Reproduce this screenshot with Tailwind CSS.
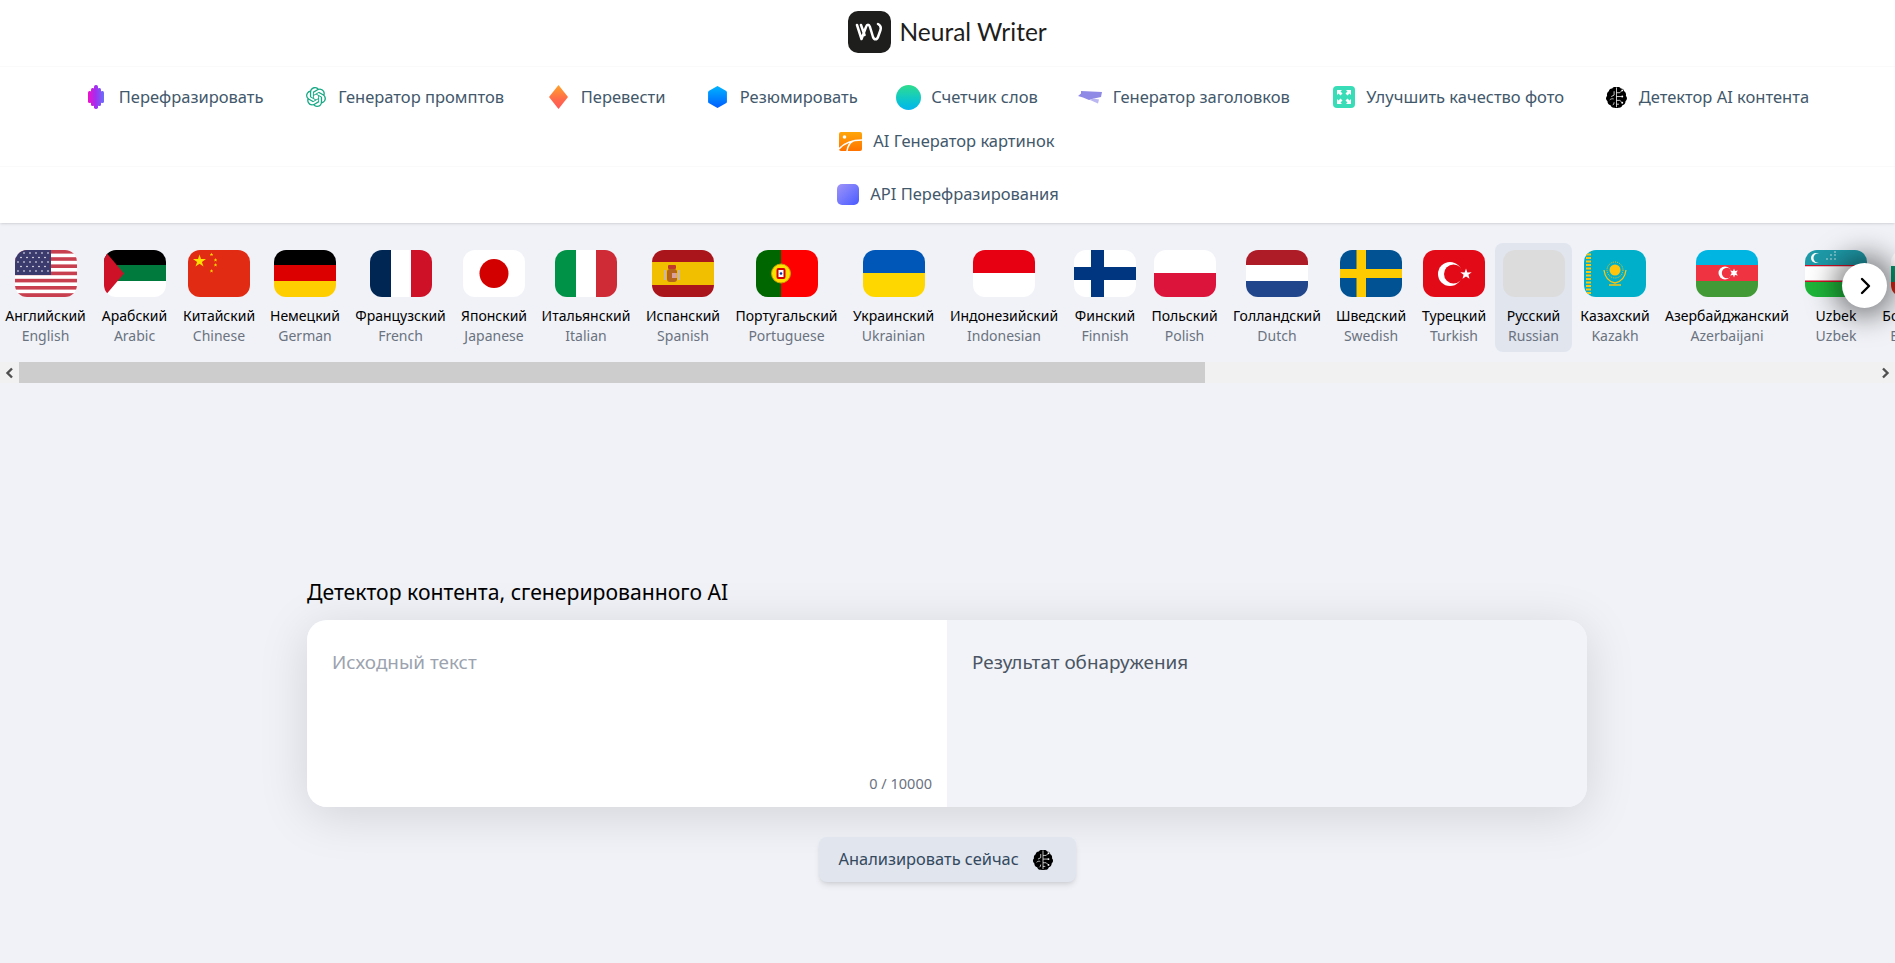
<!DOCTYPE html>
<html lang="ru">
<head>
  <meta charset="UTF-8">
  <title>Neural Writer</title>
  <script src="https://cdn.jsdelivr.net/npm/@tailwindcss/browser@4"></script>
</head>
<body class="bg-[#f0f2f7] font-['Noto_Sans',sans-serif] overflow-hidden h-[963px]">
  <svg class="hidden">
    <defs>
      <symbol id="brain" viewBox="0 0 24 24">
        <path fill="#000" d="M12 1.500C10.500 .7 8.500 1.200 7.500 2.600 5.600 2.500 4.200 3.800 4 5.600 2.400 6.500 1.600 8.500 2.200 10.200 .5 12 .7 14.400 2.600 15.800 2.400 17.800 3.800 19.500 5.600 19.800 6.200 21.700 8 23 10 22.600 10.700 23 11.400 23.100 12 22.800 12.600 23.100 13.300 23 14 22.600 16 23 17.800 21.700 18.400 19.800 20.200 19.500 21.600 17.800 21.400 15.800 23.300 14.400 23.500 12 21.800 10.200 22.400 8.500 21.600 6.500 20 5.600 19.800 3.800 18.400 2.500 16.500 2.600 15.500 1.200 13.500 .7 12 1.500Z"/>
        <path fill="none" stroke="#fff" stroke-width=".8" d="M12 2v20M12 7h3.500l2-2M12 11h5.500M12 15h3.500l2 2M12 19h2.500M9.500 5.500v4l-3 1.500M9 13.500c-1.500-.5-3 0-4 1M9.500 17c0 1.500-.5 2.500-1.500 3"/>
        <g fill="#fff"><circle cx="18" cy="11" r="1"/><circle cx="18" cy="4.600" r="1"/><circle cx="18" cy="17.400" r="1"/></g>
      </symbol>
      <symbol id="ministar" viewBox="-2 -2 4 4">
        <path fill="#ffde00" d="M0-2l.5 1.400h1.400l-1.100.8.4 1.400L0 .8l-1.200.8.4-1.400-1.100-.8h1.400Z"/>
      </symbol>
    </defs>
  </svg>

  <header class="bg-white shadow-sm">
    <div class="h-[67px] flex items-center justify-center gap-[9px] pb-[2px] border-b border-[#fafafa]">
      <div class="w-[43px] h-[42px] rounded-[10px] bg-[#1e1e1c] flex items-center justify-center">
        <svg width="28" height="20" viewBox="0 0 28 20" fill="none" stroke="#fff" stroke-width="2.500" stroke-linecap="round" stroke-linejoin="round"><path d="M2 3l4.500 14L11 5c1-3 3-3 4 0l3 10c1 3 4 3 5 0l2.500-7c.8-3-.5-5-2.500-6M6 3l3.500 10"/></svg>
      </div>
      <span class="w-[148px] whitespace-nowrap font-['Lato',sans-serif] text-[24.500px] leading-none text-[#1e1e1c]">Neural Writer</span>
    </div>

    <nav class="h-[100px] pt-[8px] flex flex-wrap justify-center content-start text-[16.500px] text-[#42586b] border-b border-[#fafafa]">
      <a class="h-[44px] flex items-center gap-[10.500px] px-[20px]">
        <span class="w-[24px] flex justify-center">
          <svg class="w-[16px] h-[24px]" viewBox="0 0 16 24"><defs><linearGradient id="g1" gradientUnits="userSpaceOnUse" x1="0" x2="16" y1="0" y2="0"><stop offset="0" stop-color="#f010c8"/><stop offset=".5" stop-color="#a030f0"/><stop offset="1" stop-color="#6a70f8"/></linearGradient></defs><g fill="url(#g1)"><rect x="0" y="6" width="3.500" height="12" rx="1.500"/><rect x="3" y="3" width="3.500" height="18" rx="1.500"/><rect x="6" y="0" width="4" height="24" rx="1.800"/><rect x="9.500" y="3" width="3.500" height="18" rx="1.500"/><rect x="12.500" y="6" width="3.500" height="12" rx="1.500"/></g></svg>
        </span>
        <span class="w-[145px] whitespace-nowrap">Перефразировать</span>
      </a>
      <a class="h-[44px] flex items-center gap-[10.500px] px-[20px]">
        <span class="w-[24px] flex justify-center">
          <svg class="w-[20px] h-[20px]" viewBox="0 0 24 24"><path fill="#17a884" d="M22.2819 9.8211a5.9847 5.9847 0 0 0-.5157-4.9108 6.0462 6.0462 0 0 0-6.5098-2.9A6.0651 6.0651 0 0 0 4.9807 4.1818a5.9847 5.9847 0 0 0-3.9977 2.9 6.0462 6.0462 0 0 0 .7427 7.0966 5.98 5.98 0 0 0 .511 4.9107 6.051 6.051 0 0 0 6.5146 2.9001A5.9847 5.9847 0 0 0 13.2599 24a6.0557 6.0557 0 0 0 5.7718-4.2058 5.9894 5.9894 0 0 0 3.9977-2.9001 6.0557 6.0557 0 0 0-.7475-7.0729zm-9.022 12.6081a4.4755 4.4755 0 0 1-2.8764-1.0408l.1419-.0804 4.7783-2.7582a.7948.7948 0 0 0 .3927-.6813v-6.7369l2.02 1.1686a.071.071 0 0 1 .038.052v5.5826a4.504 4.504 0 0 1-4.4945 4.4944zm-9.6607-4.1254a4.4708 4.4708 0 0 1-.5346-3.0137l.142.0852 4.783 2.7582a.7712.7712 0 0 0 .7806 0l5.8428-3.3685v2.3324a.0804.0804 0 0 1-.0332.0615L9.74 19.9502a4.4992 4.4992 0 0 1-6.1408-1.6464zM2.3408 7.8956a4.485 4.485 0 0 1 2.3655-1.9728V11.6a.7664.7664 0 0 0 .3879.6765l5.8144 3.3543-2.0201 1.1685a.0757.0757 0 0 1-.071 0l-4.8303-2.7865A4.504 4.504 0 0 1 2.3408 7.872zm16.5963 3.8558L13.1038 8.364 15.1192 7.2a.0757.0757 0 0 1 .071 0l4.8303 2.7913a4.4944 4.4944 0 0 1-.6765 8.1042v-5.6772a.79.79 0 0 0-.407-.667zm2.0107-3.0231l-.142-.0852-4.7735-2.7818a.7759.7759 0 0 0-.7854 0L9.409 9.2297V6.8974a.0662.0662 0 0 1 .0284-.0615l4.8303-2.7866a4.4992 4.4992 0 0 1 6.6802 4.66zM8.3065 12.863l-2.02-1.1638a.0804.0804 0 0 1-.038-.0567V6.0742a4.4992 4.4992 0 0 1 7.3757-3.4537l-.142.0805L8.704 5.459a.7948.7948 0 0 0-.3927.6813zm1.0976-2.3654l2.602-1.4998 2.6069 1.4998v2.9994l-2.5974 1.4997-2.6067-1.4997Z"/></svg>
        </span>
        <span class="w-[168px] whitespace-nowrap">Генератор промптов</span>
      </a>
      <a class="h-[44px] flex items-center gap-[10.500px] px-[20px]">
        <span class="w-[24px] flex justify-center">
          <svg class="w-[19px] h-[24px]" viewBox="0 0 19 24"><defs><linearGradient id="g3" x1="0" x2="0" y1="0" y2="1"><stop offset="0" stop-color="#ffa32b"/><stop offset=".6" stop-color="#ff6a4a"/><stop offset="1" stop-color="#ff5757"/></linearGradient></defs><path fill="url(#g3)" d="M9.500 0L19 12 9.500 24 0 12Z"/></svg>
        </span>
        <span class="w-[84.500px] whitespace-nowrap">Перевести</span>
      </a>
      <a class="h-[44px] flex items-center gap-[10.500px] px-[20px]">
        <span class="w-[24px] flex justify-center">
          <svg class="w-[19px] h-[22px]" viewBox="0 0 18 21"><defs><linearGradient id="g4" x1="0" x2="0" y1="0" y2="1"><stop offset="0" stop-color="#00b4ff"/><stop offset="1" stop-color="#005cff"/></linearGradient></defs><path fill="url(#g4)" d="M9 0l8 4.500q1 .5 1 1.500v9q0 1-1 1.500L9 21 1 16.500Q0 16 0 15V6q0-1 1-1.500Z"/></svg>
        </span>
        <span class="w-[117px] whitespace-nowrap">Резюмировать</span>
      </a>
      <a class="h-[44px] flex items-center gap-[10.500px] px-[20px]">
        <span class="w-[24px] flex justify-center">
          <span class="w-[25px] h-[25px] shrink-0 rounded-full bg-linear-to-b from-[#2fdc8c] to-[#08b5ee]"></span>
        </span>
        <span class="w-[107px] whitespace-nowrap">Счетчик слов</span>
      </a>
      <a class="h-[44px] flex items-center gap-[10.500px] px-[20px]">
        <span class="w-[24px] flex justify-center">
          <svg class="w-[24px] h-[13px]" viewBox="0 0 24 13"><path fill="#8f8ae6" d="M3 0l21 1-1 5-7 1.500-5 1.500-6-2.500L0 5l3-2.500Z"/><path fill="#b9b6f2" d="M15 7.500l6 1-1 4-8-3.500Z"/></svg>
        </span>
        <span class="w-[179px] whitespace-nowrap">Генератор заголовков</span>
      </a>
      <a class="h-[44px] flex items-center gap-[10.500px] px-[20px]">
        <span class="w-[24px] flex justify-center">
          <svg class="w-[22px] h-[22px]" viewBox="0 0 22 22"><rect width="22" height="22" rx="4" fill="#38dcb6"/><g fill="#fff"><path d="M4 4h5L7.500 5.500l2 2-2 2-2-2L4 9Z"/><path d="M18 4h-5l1.500 1.500-2 2 2 2 2-2L18 9Z"/><path d="M4 18h5l-1.500-1.500 2-2-2-2-2 2L4 13Z"/><path d="M18 18h-5l1.500-1.500-2-2 2-2 2 2L18 13Z"/></g></svg>
        </span>
        <span class="w-[198px] whitespace-nowrap">Улучшить качество фото</span>
      </a>
      <a class="h-[44px] flex items-center gap-[10.500px] px-[20px]">
        <span class="w-[24px] flex justify-center">
          <svg class="w-[23px] h-[23px]"><use href="#brain"/></svg>
        </span>
        <span class="w-[172px] whitespace-nowrap">Детектор AI контента</span>
      </a>
      <a class="h-[44px] flex items-center gap-[10.500px] px-[20px]">
        <span class="w-[24px] flex justify-center">
          <svg class="w-[23px] h-[19px]" viewBox="0 0 23 19"><defs><linearGradient id="g9" x1="0" x2="0" y1="0" y2="1"><stop offset="0" stop-color="#ffa60a"/><stop offset="1" stop-color="#ff7300"/></linearGradient></defs><rect width="23" height="19" rx="2" fill="url(#g9)"/><path fill="none" stroke="#fff" stroke-width="1.500" d="M0 17c6-7 15-9 23-9M8 19c.5-4 2.500-8 6-10"/><circle cx="5.500" cy="5" r="1.800" fill="#fff"/></svg>
        </span>
        <span class="w-[183px] whitespace-nowrap">AI Генератор картинок</span>
      </a>
    </nav>

    <div class="h-[56px] flex items-center justify-center gap-[10.500px] pb-[1px] text-[16.500px] text-[#42586b]">
      <span class="w-[24px] flex justify-center">
        <span class="w-[22px] h-[21px] rounded-[5px] bg-linear-to-br from-[#a093f8] to-[#4a58ff]"></span>
      </span>
      <span class="w-[189px] whitespace-nowrap">API Перефразирования</span>
    </div>
  </header>

  <section class="relative pt-[20px]">
    <div class="flex overflow-hidden -ml-[3px] w-[1898px] text-center text-[14px] leading-[20px] text-black">
      <div class="w-[97px] shrink-0 pt-[7px] pb-[6px] flex flex-col items-center rounded-lg">
        <div class="w-[62px] h-[47px] rounded-[12px] overflow-hidden mb-[9px]">
          <svg width="62" height="47" viewBox="0 0 62 47"><rect width="62" height="47" fill="#fff"/><g fill="#c8404f"><rect width="62" height="3.600"/><rect y="7.200" width="62" height="3.600"/><rect y="14.400" width="62" height="3.600"/><rect y="21.600" width="62" height="3.600"/><rect y="28.800" width="62" height="3.600"/><rect y="36" width="62" height="3.600"/><rect y="43.200" width="62" height="3.800"/></g><rect width="36" height="25" fill="#3c3b6e"/><g fill="#fff"><circle cx="3" cy="3" r=".8"/><circle cx="9" cy="3" r=".8"/><circle cx="15" cy="3" r=".8"/><circle cx="21" cy="3" r=".8"/><circle cx="27" cy="3" r=".8"/><circle cx="33" cy="3" r=".8"/><circle cx="6" cy="7.500" r=".8"/><circle cx="12" cy="7.500" r=".8"/><circle cx="18" cy="7.500" r=".8"/><circle cx="24" cy="7.500" r=".8"/><circle cx="30" cy="7.500" r=".8"/><circle cx="3" cy="12" r=".8"/><circle cx="9" cy="12" r=".8"/><circle cx="15" cy="12" r=".8"/><circle cx="21" cy="12" r=".8"/><circle cx="27" cy="12" r=".8"/><circle cx="33" cy="12" r=".8"/><circle cx="6" cy="16.500" r=".8"/><circle cx="12" cy="16.500" r=".8"/><circle cx="18" cy="16.500" r=".8"/><circle cx="24" cy="16.500" r=".8"/><circle cx="30" cy="16.500" r=".8"/><circle cx="3" cy="21" r=".8"/><circle cx="9" cy="21" r=".8"/><circle cx="15" cy="21" r=".8"/><circle cx="21" cy="21" r=".8"/><circle cx="27" cy="21" r=".8"/><circle cx="33" cy="21" r=".8"/></g></svg>
        </div>
        <span class="whitespace-nowrap">Английский</span><span class="text-[#6b7280] whitespace-nowrap">English</span>
      </div>
      <div class="w-[81px] shrink-0 pt-[7px] pb-[6px] flex flex-col items-center rounded-lg">
        <div class="w-[62px] h-[47px] rounded-[12px] overflow-hidden mb-[9px]">
          <svg width="62" height="47" viewBox="0 0 62 47"><rect width="62" height="15" fill="#000"/><rect y="15" width="62" height="16" fill="#007a3d"/><rect y="31" width="62" height="16" fill="#fff"/><path fill="#ce1126" d="M0 0l20 23.500L0 47Z"/></svg>
        </div>
        <span class="whitespace-nowrap">Арабский</span><span class="text-[#6b7280] whitespace-nowrap">Arabic</span>
      </div>
      <div class="w-[88px] shrink-0 pt-[7px] pb-[6px] flex flex-col items-center rounded-lg">
        <div class="w-[62px] h-[47px] rounded-[12px] overflow-hidden mb-[9px]">
          <svg width="62" height="47" viewBox="0 0 62 47"><rect width="62" height="47" fill="#e12b12"/><path fill="#ffde00" d="M11.500 4.500L13 9h5l-4.100 3 1.600 4.500-4-2.700-4 2.700L9.100 12 5 9h5Z"/><use href="#ministar" x="21.500" y="2.500" width="4" height="4"/><use href="#ministar" x="25.500" y="8" width="4" height="4"/><use href="#ministar" x="25.500" y="13" width="4" height="4"/><use href="#ministar" x="21.500" y="19" width="4" height="4"/></svg>
        </div>
        <span class="whitespace-nowrap">Китайский</span><span class="text-[#6b7280] whitespace-nowrap">Chinese</span>
      </div>
      <div class="w-[84px] shrink-0 pt-[7px] pb-[6px] flex flex-col items-center rounded-lg">
        <div class="w-[62px] h-[47px] rounded-[12px] overflow-hidden mb-[9px]">
          <svg width="62" height="47" viewBox="0 0 62 47"><rect width="62" height="16" fill="#000"/><rect y="15" width="62" height="16" fill="#dd0000"/><rect y="31" width="62" height="16" fill="#ffce00"/></svg>
        </div>
        <span class="whitespace-nowrap">Немецкий</span><span class="text-[#6b7280] whitespace-nowrap">German</span>
      </div>
      <div class="w-[107px] shrink-0 pt-[7px] pb-[6px] flex flex-col items-center rounded-lg">
        <div class="w-[62px] h-[47px] rounded-[12px] overflow-hidden mb-[9px]">
          <svg width="62" height="47" viewBox="0 0 62 47"><rect width="21" height="47" fill="#002654"/><rect x="21" width="20" height="47" fill="#fff"/><rect x="41" width="21" height="47" fill="#ce1126"/></svg>
        </div>
        <span class="whitespace-nowrap">Французский</span><span class="text-[#6b7280] whitespace-nowrap">French</span>
      </div>
      <div class="w-[80px] shrink-0 pt-[7px] pb-[6px] flex flex-col items-center rounded-lg">
        <div class="w-[62px] h-[47px] rounded-[12px] overflow-hidden mb-[9px]">
          <svg width="62" height="47" viewBox="0 0 62 47"><rect width="62" height="47" fill="#fff"/><circle cx="31" cy="23.500" r="14.500" fill="#d30000"/></svg>
        </div>
        <span class="whitespace-nowrap">Японский</span><span class="text-[#6b7280] whitespace-nowrap">Japanese</span>
      </div>
      <div class="w-[104px] shrink-0 pt-[7px] pb-[6px] flex flex-col items-center rounded-lg">
        <div class="w-[62px] h-[47px] rounded-[12px] overflow-hidden mb-[9px]">
          <svg width="62" height="47" viewBox="0 0 62 47"><rect width="21" height="47" fill="#009246"/><rect x="21" width="20" height="47" fill="#fff"/><rect x="41" width="21" height="47" fill="#ce2b37"/></svg>
        </div>
        <span class="whitespace-nowrap">Итальянский</span><span class="text-[#6b7280] whitespace-nowrap">Italian</span>
      </div>
      <div class="w-[90px] shrink-0 pt-[7px] pb-[6px] flex flex-col items-center rounded-lg">
        <div class="w-[62px] h-[47px] rounded-[12px] overflow-hidden mb-[9px]">
          <svg width="62" height="47" viewBox="0 0 62 47"><rect width="62" height="47" fill="#aa151b"/><rect y="12" width="62" height="23" fill="#f1bf00"/><rect x="15" y="19" width="10" height="13" rx="3" fill="#b5651d"/><rect x="12" y="20" width="2" height="10" fill="#c8b6a6"/><rect x="26" y="20" width="2" height="10" fill="#c8b6a6"/><rect x="16" y="15" width="8" height="4" rx="1" fill="#c0392b"/><rect x="20" y="23" width="5" height="5" fill="#d8a0a0"/></svg>
        </div>
        <span class="whitespace-nowrap">Испанский</span><span class="text-[#6b7280] whitespace-nowrap">Spanish</span>
      </div>
      <div class="w-[117px] shrink-0 pt-[7px] pb-[6px] flex flex-col items-center rounded-lg">
        <div class="w-[62px] h-[47px] rounded-[12px] overflow-hidden mb-[9px]">
          <svg width="62" height="47" viewBox="0 0 62 47"><rect width="25" height="47" fill="#006600"/><rect x="25" width="37" height="47" fill="#ff0000"/><circle cx="25" cy="23.500" r="9.500" fill="#ffe000" stroke="#c9a400"/><rect x="20.500" y="18" width="9" height="11" rx="2" fill="#d50000"/><rect x="22.500" y="20" width="5" height="7" fill="#fff"/><circle cx="25" cy="23.500" r="1.300" fill="#0033a0"/></svg>
        </div>
        <span class="whitespace-nowrap">Португальский</span><span class="text-[#6b7280] whitespace-nowrap">Portuguese</span>
      </div>
      <div class="w-[97px] shrink-0 pt-[7px] pb-[6px] flex flex-col items-center rounded-lg">
        <div class="w-[62px] h-[47px] rounded-[12px] overflow-hidden mb-[9px]">
          <svg width="62" height="47" viewBox="0 0 62 47"><rect width="62" height="23" fill="#0057b7"/><rect y="23" width="62" height="24" fill="#ffd700"/></svg>
        </div>
        <span class="whitespace-nowrap">Украинский</span><span class="text-[#6b7280] whitespace-nowrap">Ukrainian</span>
      </div>
      <div class="w-[124px] shrink-0 pt-[7px] pb-[6px] flex flex-col items-center rounded-lg">
        <div class="w-[62px] h-[47px] rounded-[12px] overflow-hidden mb-[9px]">
          <svg width="62" height="47" viewBox="0 0 62 47"><rect width="62" height="23" fill="#e70011"/><rect y="23" width="62" height="24" fill="#fff"/></svg>
        </div>
        <span class="whitespace-nowrap">Индонезийский</span><span class="text-[#6b7280] whitespace-nowrap">Indonesian</span>
      </div>
      <div class="w-[78px] shrink-0 pt-[7px] pb-[6px] flex flex-col items-center rounded-lg">
        <div class="w-[62px] h-[47px] rounded-[12px] overflow-hidden mb-[9px]">
          <svg width="62" height="47" viewBox="0 0 62 47"><rect width="62" height="47" fill="#fff"/><rect x="17" width="13" height="47" fill="#003580"/><rect y="17" width="62" height="13" fill="#003580"/></svg>
        </div>
        <span class="whitespace-nowrap">Финский</span><span class="text-[#6b7280] whitespace-nowrap">Finnish</span>
      </div>
      <div class="w-[81px] shrink-0 pt-[7px] pb-[6px] flex flex-col items-center rounded-lg">
        <div class="w-[62px] h-[47px] rounded-[12px] overflow-hidden mb-[9px]">
          <svg width="62" height="47" viewBox="0 0 62 47"><rect width="62" height="23" fill="#fff"/><rect y="23" width="62" height="24" fill="#dc143c"/></svg>
        </div>
        <span class="whitespace-nowrap">Польский</span><span class="text-[#6b7280] whitespace-nowrap">Polish</span>
      </div>
      <div class="w-[104px] shrink-0 pt-[7px] pb-[6px] flex flex-col items-center rounded-lg">
        <div class="w-[62px] h-[47px] rounded-[12px] overflow-hidden mb-[9px]">
          <svg width="62" height="47" viewBox="0 0 62 47"><rect width="62" height="16" fill="#ae1c28"/><rect y="15" width="62" height="16" fill="#fff"/><rect y="31" width="62" height="16" fill="#21468b"/></svg>
        </div>
        <span class="whitespace-nowrap">Голландский</span><span class="text-[#6b7280] whitespace-nowrap">Dutch</span>
      </div>
      <div class="w-[84px] shrink-0 pt-[7px] pb-[6px] flex flex-col items-center rounded-lg">
        <div class="w-[62px] h-[47px] rounded-[12px] overflow-hidden mb-[9px]">
          <svg width="62" height="47" viewBox="0 0 62 47"><rect width="62" height="47" fill="#005293"/><rect x="16.500" width="9.500" height="47" fill="#fecb00"/><rect y="19" width="62" height="9" fill="#fecb00"/></svg>
        </div>
        <span class="whitespace-nowrap">Шведский</span><span class="text-[#6b7280] whitespace-nowrap">Swedish</span>
      </div>
      <div class="w-[82px] shrink-0 pt-[7px] pb-[6px] flex flex-col items-center rounded-lg">
        <div class="w-[62px] h-[47px] rounded-[12px] overflow-hidden mb-[9px]">
          <svg width="62" height="47" viewBox="0 0 62 47"><rect width="62" height="47" fill="#e30a17"/><circle cx="27" cy="24" r="12" fill="#fff"/><circle cx="30.500" cy="24" r="9.500" fill="#e30a17"/><path fill="#fff" d="M43 18.500l1.400 3.900 4.300-.2-3.300 2.600 1.100 4-3.500-2.300-3.500 2.300 1.100-4-3.300-2.600 4.300.2Z"/></svg>
        </div>
        <span class="whitespace-nowrap">Турецкий</span><span class="text-[#6b7280] whitespace-nowrap">Turkish</span>
      </div>
      <div class="w-[77px] shrink-0 pt-[7px] pb-[6px] flex flex-col items-center rounded-lg bg-[#e0e5ee]">
        <div class="w-[62px] h-[47px] rounded-[12px] overflow-hidden mb-[9px] bg-[#dcdcdc]"></div>
        <span class="whitespace-nowrap">Русский</span><span class="text-[#6b7280] whitespace-nowrap">Russian</span>
      </div>
      <div class="w-[86px] shrink-0 pt-[7px] pb-[6px] flex flex-col items-center rounded-lg">
        <div class="w-[62px] h-[47px] rounded-[12px] overflow-hidden mb-[9px]">
          <svg width="62" height="47" viewBox="0 0 62 47"><rect width="62" height="47" fill="#00afca"/><path stroke="#fec50c" stroke-width="5" stroke-dasharray="2 1.500" d="M4.500 0v47"/><circle cx="31" cy="20" r="5.500" fill="#fec50c"/><circle cx="31" cy="20" r="8" fill="none" stroke="#fec50c" stroke-width="1" stroke-dasharray="1 1.200"/><path fill="none" stroke="#fec50c" stroke-width="1.300" d="M20 20c1 8 6 12 11 13 5-1 10-5 11-13M25 35h12"/></svg>
        </div>
        <span class="whitespace-nowrap">Казахский</span><span class="text-[#6b7280] whitespace-nowrap">Kazakh</span>
      </div>
      <div class="w-[138px] shrink-0 pt-[7px] pb-[6px] flex flex-col items-center rounded-lg">
        <div class="w-[62px] h-[47px] rounded-[12px] overflow-hidden mb-[9px]">
          <svg width="62" height="47" viewBox="0 0 62 47"><rect width="62" height="16" fill="#00b5e2"/><rect y="15" width="62" height="16" fill="#ef3340"/><rect y="31" width="62" height="16" fill="#419a35"/><circle cx="29" cy="23" r="6.500" fill="#fff"/><circle cx="31" cy="23" r="5.200" fill="#ef3340"/><path fill="#fff" d="M38 18.500l1 2.600 2.800-.6-1.500 2.500 1.500 2.500-2.800-.6-1 2.600-1-2.600-2.800.6 1.500-2.500-1.500-2.500 2.800.6Z"/></svg>
        </div>
        <span class="whitespace-nowrap">Азербайджанский</span><span class="text-[#6b7280] whitespace-nowrap">Azerbaijani</span>
      </div>
      <div class="w-[80px] shrink-0 pt-[7px] pb-[6px] flex flex-col items-center rounded-lg">
        <div class="w-[62px] h-[47px] rounded-[12px] overflow-hidden mb-[9px]">
          <svg width="62" height="47" viewBox="0 0 62 47"><rect width="62" height="16" fill="#1e9aa8"/><rect y="15" width="62" height="1.500" fill="#ce1126"/><rect y="16.500" width="62" height="14" fill="#fff"/><rect y="30.500" width="62" height="1.500" fill="#ce1126"/><rect y="32" width="62" height="15" fill="#1eb53a"/><circle cx="11" cy="8" r="5" fill="#fff"/><circle cx="13" cy="8" r="4.500" fill="#1e9aa8"/><g fill="#fff"><circle cx="22" cy="9" r=".7"/><circle cx="26" cy="9" r=".7"/><circle cx="30" cy="9" r=".7"/><circle cx="26" cy="5" r=".7"/><circle cx="30" cy="5" r=".7"/><circle cx="30" cy="2" r=".7"/></g></svg>
        </div>
        <span class="whitespace-nowrap">Uzbek</span><span class="text-[#6b7280] whitespace-nowrap">Uzbek</span>
      </div>
      <div class="w-[92px] shrink-0 pt-[7px] pb-[6px] flex flex-col items-center rounded-lg">
        <div class="w-[62px] h-[47px] rounded-[12px] overflow-hidden mb-[9px]">
          <svg width="62" height="47" viewBox="0 0 62 47"><rect width="62" height="16" fill="#fff"/><rect y="16" width="62" height="16" fill="#00966e"/><rect y="32" width="62" height="15" fill="#d62612"/></svg>
        </div>
        <span class="whitespace-nowrap">Болгарский</span><span class="text-[#6b7280] whitespace-nowrap">Bulgarian</span>
      </div>
    </div>

    <button class="absolute left-[1842px] top-[40px] w-[45px] h-[45px] rounded-full bg-white flex items-center justify-center shadow-[0_0_28px_8px_rgba(0,0,0,0.5)]">
      <svg class="w-[20px] h-[20px]" viewBox="0 0 20 20" fill="none" stroke="#000" stroke-width="2.400" stroke-linecap="round" stroke-linejoin="round"><path d="M7 3l7 7-7 7"/></svg>
    </button>

    <div class="mt-[10px] h-[21px] bg-[#f1f1f1] flex items-center">
      <div class="w-[19px] h-full flex items-center justify-center"><svg class="w-[9px] h-[12px]" viewBox="0 0 9 12" fill="none" stroke="#505050" stroke-width="2.400"><path d="M7 1.500L2.500 6 7 10.500"/></svg></div>
      <div class="w-[1186px] h-full bg-[#cdcdcd]"></div>
      <div class="flex-1"></div>
      <div class="w-[19px] h-full flex items-center justify-center"><svg class="w-[9px] h-[12px]" viewBox="0 0 9 12" fill="none" stroke="#505050" stroke-width="2.400"><path d="M2 1.500L6.500 6 2 10.500"/></svg></div>
    </div>
  </section>

  <main class="w-[1280px] ml-[307px] mt-[195px]">
    <h1 class="text-[21.200px] leading-[28px] text-black whitespace-nowrap">Детектор контента, сгенерированного AI</h1>
    <div class="mt-[14px] h-[187px] flex rounded-[20px] overflow-hidden shadow-[0_8px_50px_rgba(0,0,0,0.13)]">
      <div class="relative w-1/2 bg-white px-[25px] pt-[28px] text-[18.900px] leading-[28px] text-[#9ca3af]">
        Исходный текст
        <span class="absolute right-[15px] bottom-[14px] text-[14.500px] leading-[20px] text-[#6b7280]">0 / 10000</span>
      </div>
      <div class="w-1/2 bg-[#f1f3f8] px-[25px] pt-[28px] text-[18.900px] leading-[28px] text-[#4b5563]">Результат обнаружения</div>
    </div>
    <div class="mt-[30px] flex justify-center">
      <button class="w-[257px] h-[45px] rounded-lg bg-[#e0e5ee] shadow-md flex items-center pl-[20px] gap-[12px] text-[16.400px] text-[#34495e]">
        <span class="w-[181px] text-left whitespace-nowrap">Анализировать сейчас</span>
        <svg class="w-[22px] h-[22px]"><use href="#brain"/></svg>
      </button>
    </div>
  </main>
</body>
</html>
